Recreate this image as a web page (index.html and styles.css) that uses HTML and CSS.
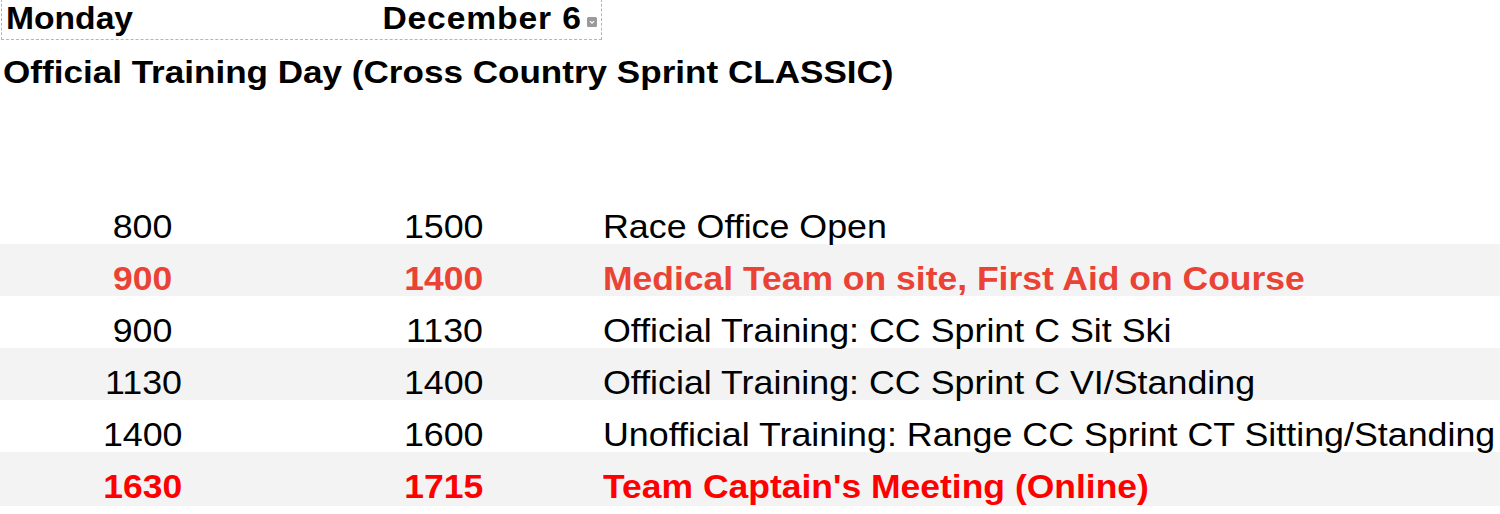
FILE: index.html
```html
<!DOCTYPE html>
<html>
<head>
<meta charset="utf-8">
<link rel="stylesheet" href="styles.css">
</head>
<body>
<div class="sheet">
  <div class="daybox">
    <span class="t tl">Monday</span>
    <span class="date"><span class="t tr">December 6</span><span class="dd"><svg width="10" height="10" viewBox="0 0 10 10"><rect x="0" y="0" width="10" height="10" rx="1.5" fill="#9a9a9a"/><path d="M3 4.2 L5 6.2 L7 4.2" fill="none" stroke="#fff" stroke-width="1.2"/></svg></span></span>
  </div>
  <div class="title"><span class="t tl">Official Training Day (Cross Country Sprint CLASSIC)</span></div>
  <div class="rows">
    <div class="row"><div class="c1"><span class="t">800</span></div><div class="c2"><span class="t">1500</span></div><div class="c3"><span class="t tl">Race Office Open</span></div></div>
    <div class="row alt red1"><div class="c1"><span class="t">900</span></div><div class="c2"><span class="t">1400</span></div><div class="c3"><span class="t tl">Medical Team on site, First Aid on Course</span></div></div>
    <div class="row"><div class="c1"><span class="t">900</span></div><div class="c2"><span class="t">1130</span></div><div class="c3"><span class="t tl">Official Training: CC Sprint C Sit Ski</span></div></div>
    <div class="row alt"><div class="c1"><span class="t">1130</span></div><div class="c2"><span class="t">1400</span></div><div class="c3"><span class="t tl">Official Training: CC Sprint C VI/Standing</span></div></div>
    <div class="row"><div class="c1"><span class="t">1400</span></div><div class="c2"><span class="t">1600</span></div><div class="c3"><span class="t tl">Unofficial Training: Range CC Sprint CT Sitting/Standing</span></div></div>
    <div class="row alt red2 last"><div class="c1"><span class="t">1630</span></div><div class="c2"><span class="t">1715</span></div><div class="c3"><span class="t tl">Team Captain's Meeting (Online)</span></div></div>
  </div>
</div>
</body>
</html>
```
FILE: styles.css
```css
html, body {
  margin: 0;
  padding: 0;
  background: #fff;
}
body {
  font-family: "Liberation Sans", Arial, sans-serif;
  color: #000;
  width: 1500px;
  height: 514px;
  overflow: hidden;
}
.sheet {
  display: flex;
  flex-direction: column;
}
.t {
  display: inline-block;
  white-space: nowrap;
  transform: scaleX(1.085);
  transform-origin: center;
}
.t.tl {
  transform-origin: left center;
}
.t.tr {
  transform-origin: right center;
}
.daybox {
  margin-left: 1px;
  margin-top: -1px;
  width: 596px;
  height: 37px;
  padding-top: 2px;
  padding-left: 3px;
  border: 1px dashed #b5b5b5;
  display: flex;
  justify-content: space-between;
  align-items: flex-start;
  font-weight: bold;
  font-size: 31px;
  line-height: 34px;
}
.daybox .tl {
  margin-left: 1px;
}
.date {
  display: flex;
  align-items: flex-start;
  padding-right: 4px;
}
.date .t {
  letter-spacing: 0.8px;
}
.dd {
  display: flex;
  margin-top: 15px;
  margin-left: 5px;
}
.title {
  margin-top: 14px;
  padding-left: 3px;
  font-weight: bold;
  font-size: 32px;
  line-height: 36px;
  white-space: nowrap;
}
.title .t {
  transform: scaleX(1.096);
}
.rows {
  margin-top: 102px;
  display: flex;
  flex-direction: column;
}
.row {
  display: grid;
  grid-template-columns: 286px 316px 1fr;
  height: 52px;
  padding-top: 16px;
  box-sizing: border-box;
  font-size: 33px;
  line-height: 38px;
  white-space: nowrap;
}
.row.last {
  height: 54px;
}
.alt {
  background: #f3f3f3;
}
.c1, .c2 {
  text-align: center;
}
.c3 {
  padding-left: 1px;
}
.red1 {
  color: #ea4335;
  font-weight: bold;
}
.red2 {
  color: #ff0000;
  font-weight: bold;
}
.red1 .t, .red2 .t {
  transform: scaleX(1.075);
}
```
